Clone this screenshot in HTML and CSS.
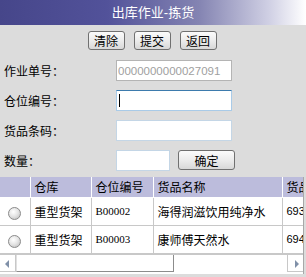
FILE: index.html
```html
<!DOCTYPE html>
<html lang="zh">
<head>
 <meta charset="UTF-8">
 <title>出库作业-拣货</title>
 <link rel="stylesheet" href="styles.css">
</head>
<body>
<div class="title">出库作业-拣货</div>
<div class="toolbar">
 <button class="btn">清除</button>
 <button class="btn">提交</button>
 <button class="btn">返回</button>
</div>
<div class="form">
 <label class="form-label">作业单号：</label>
 <input type="text" class="field field-disabled" value="0000000000027091" disabled>
 <label class="form-label">仓位编号：</label>
 <span class="field-wrap"><input type="text" class="field field-focus"><span class="caret"></span></span>
 <label class="form-label">货品条码：</label>
 <input type="text" class="field">
 <label class="form-label">数量：</label>
 <div class="qty-row">
  <input type="text" class="field field-qty">
  <button class="btn btn-ok">确定</button>
 </div>
</div>
<div class="grid-wrap">
 <table class="grid">
  <tr class="grid-head">
   <th class="col-radio"></th>
   <th class="col-store">仓库</th>
   <th class="col-loc">仓位编号</th>
   <th class="col-name">货品名称</th>
   <th class="col-code">货品条码</th>
  </tr>
  <tr>
   <td><span class="radio"></span></td>
   <td>重型货架</td>
   <td class="code">B00002</td>
   <td>海得润滋饮用纯净水</td>
   <td class="num">6931234500012</td>
  </tr>
  <tr>
   <td><span class="radio"></span></td>
   <td>重型货架</td>
   <td class="code">B00003</td>
   <td>康师傅天然水</td>
   <td class="num">6941234500013</td>
  </tr>
 </table>
 <div class="hscroll">
  <div class="arrow arrow-left"></div>
  <div class="thumb"></div>
  <div class="track"></div>
  <div class="arrow arrow-right"></div>
 </div>
</div>
</body>
</html>
```

FILE: styles.css
```css
body {
 margin: 0;
 background: #dcdcdc;
 font-family: "Liberation Sans", "Noto Sans CJK SC", sans-serif;
 font-size: 12px;
 color: #000;
 }
.title {
 height: 25px;
 line-height: 25px;
 text-align: center;
 color: #fff;
 font-size: 13px;
 background: linear-gradient(to right, #46468a 0%, #52529a 35%, #8484b2 65%, #d0d0e4 88%, #fff 100%);
 }
.toolbar {
 display: flex;
 justify-content: center;
 gap: 9px;
 padding-top: 6px;
 padding-right: 2px;
 }
.btn {
 height: 19px;
 width: 37px;
 padding: 0;
 font-family: "Noto Sans CJK SC", sans-serif;
 font-size: 12px;
 line-height: 15px;
 color: #000;
 background: linear-gradient(#fbfbfb, #ececec 50%, #d8d8d8);
 border: 1px solid #707070;
 border-radius: 3px;
 }
.form {
 display: grid;
 grid-template-columns: 112px 1fr;
 row-gap: 9px;
 padding: 10px 0 0 4px;
 }
.form-label {
 height: 21px;
 line-height: 21px;
 font-family: "Noto Sans CJK SC", sans-serif;
 font-size: 12px;
 }
.field {
 box-sizing: border-box;
 width: 116px;
 height: 21px;
 margin: 0;
 padding: 0 2px;
 border: 1px solid #c4d6e6;
 background: #fff;
 font-family: "Liberation Sans", sans-serif;
 font-size: 11.5px;
 outline: none;
 }
.field-disabled {
 border-color: #b4b4b4;
 color: #a0a0a0;
 background: #fff;
 padding: 0 1px;
 }
.field-focus {
 border-color: #3d7bad #a9cbe8 #a9cbe8 #a9cbe8;
 }
.field-wrap {
 position: relative;
 width: 116px;
 height: 21px;
 }
.caret {
 position: absolute;
 left: 3px;
 top: 4px;
 width: 1px;
 height: 13px;
 background: #000;
 }
.qty-row {
 display: flex;
 gap: 8px;
 }
.field-qty {
 width: 54px;
 }
.btn-ok {
 width: 57px;
 height: 20px;
 }
.grid-wrap {
 margin-top: 6px;
 width: 303px;
 overflow: hidden;
 border-right: 1px solid #a8a8a8;
 }
.grid {
 border-collapse: collapse;
 table-layout: fixed;
 width: 402px;
 font-family: "Noto Sans CJK SC", sans-serif;
 font-size: 12px;
 }
.grid th, .grid td {
 box-sizing: border-box;
 padding: 0 0 0 4px;
 text-align: left;
 white-space: nowrap;
 overflow: hidden;
 }
.grid-head th {
 height: 20px;
 font-weight: normal;
 background: #bcbcdc;
 border-left: 1px solid #fff;
 border-bottom: 1px solid #fff;
 }
.grid-head th:first-child {
 border-left: none;
 }
.grid td {
 height: 28px;
 background: #fff;
 border-left: 1px solid #c8c8c8;
 border-bottom: 1px solid #c8c8c8;
 }
.grid td:first-child {
 border-left: none;
 text-align: center;
 padding: 0;
 }
.col-radio { width: 30px; }
.col-store { width: 61px; }
.col-loc { width: 62px; }
.col-name { width: 129px; }
.col-code { width: 120px; }
.code {
 font-family: "Liberation Serif", serif;
 font-size: 11px;
 }
.num {
 font-family: "Liberation Sans", sans-serif;
 font-size: 11px;
 }
.radio {
 display: inline-block;
 width: 11px;
 height: 11px;
 margin-top: 2px;
 border: 1px solid #8c8c8c;
 border-radius: 50%;
 background: radial-gradient(circle at 40% 35%, #fff 0%, #e6e6e6 45%, #b8b8b8 100%);
 vertical-align: middle;
 }
.hscroll {
 display: flex;
 height: 19px;
 background: #fff;
 border-top: 1px solid #c8c8c8;
 }
.arrow {
 position: relative;
 width: 16px;
 height: 17px;
 box-sizing: border-box;
 }
.arrow-left {
 border-right: 1px solid #c8c8c8;
 border-bottom: 1px solid #c8c8c8;
 }
.arrow-right {
 border-left: 1px solid #c8c8c8;
 border-bottom: 1px solid #c8c8c8;
 }
.arrow::after {
 content: "";
 position: absolute;
 top: 5px;
 border-top: 4px solid transparent;
 border-bottom: 4px solid transparent;
 }
.arrow-left::after {
 left: 5px;
 border-right: 4px solid #8090a8;
 }
.arrow-right::after {
 left: 7px;
 border-left: 4px solid #8090a8;
 }
.thumb {
 width: 158px;
 height: 17px;
 box-sizing: border-box;
 border-right: 1px solid #8c8c8c;
 border-bottom: 1px solid #8c8c8c;
 border-left: 1px solid #e0e0e0;
 }
.track {
 flex: 1;
 }
```
